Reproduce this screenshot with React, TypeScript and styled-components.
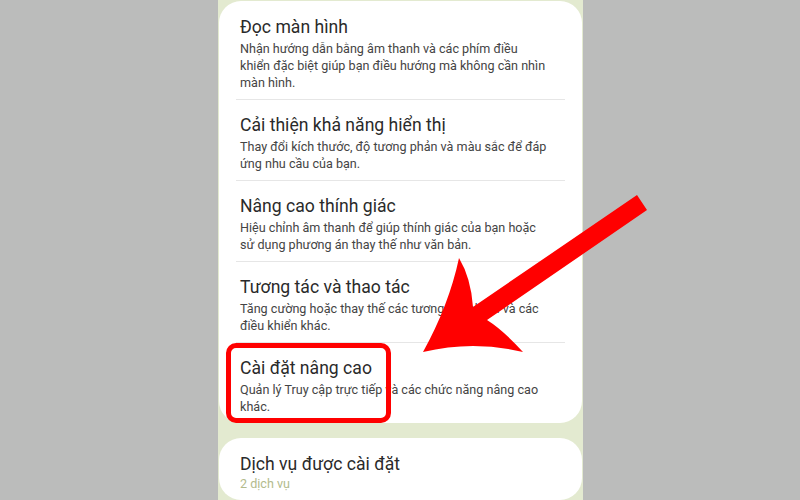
import styled, { createGlobalStyle } from "styled-components";

const GlobalStyle = createGlobalStyle`
    html, body {
        margin: 0;
        padding: 0;
        background: #bbbcbb;
    }
    body {
        font-family: Roboto, "Noto Sans", "Liberation Sans", sans-serif;
    }
`

const Page = styled.div`
    position: relative;
    width: 800px;
    height: 500px;
    overflow: hidden;
    display: flex;
    justify-content: center;
    background: #bbbcbb;
`
const Screen = styled.div`
    width: 365px;
    height: 500px;
    margin-left: 1px;
    padding: 1px 1px 0;
    box-sizing: border-box;
    display: flex;
    flex-direction: column;
    gap: 15px;
    background: #e3ead0;
`
const Card = styled.div`
    background: #fff;
    border-radius: 22px;
    display: flex;
    flex-direction: column;
    flex-shrink: 0;
`
const Item = styled.div<{ $highlight?: boolean }>`
    position: relative;
    padding: 15px 20px 8px 21px;
    ${props => props.$highlight && `
        &::after {
            content: "";
            position: absolute;
            left: 7px;
            top: 1px;
            width: 165px;
            bottom: 0;
            box-sizing: border-box;
            border: 5px solid #ff0000;
            border-radius: 10px;
        }
    `}
`
const Divided = styled(Card)`
    ${Item} + ${Item}::before {
        content: "";
        position: absolute;
        top: 0;
        left: 17px;
        right: 17px;
        height: 1px;
        background: #e6e6e6;
    }
`
const Title = styled.div`
    color: #2a2a2a;
    font-size: 17.6px;
    line-height: 22px;
`
const Desc = styled.div<{ $muted?: boolean }>`
    margin-top: ${props => props.$muted ? '0' : '2px'};
    color: ${props => props.$muted ? '#b3bb8c' : '#444'};
    font-size: 12.6px;
    line-height: 17px;
    max-width: 310px;
`
const Arrow = styled.svg`
    position: absolute;
    left: 0;
    top: 0;
    width: 800px;
    height: 500px;
    pointer-events: none;
`

const items = [
    {
        title: "Đọc màn hình",
        desc: "Nhận hướng dẫn bằng âm thanh và các phím điều khiển đặc biệt giúp bạn điều hướng mà không cần nhìn màn hình.",
    },
    {
        title: "Cải thiện khả năng hiển thị",
        desc: "Thay đổi kích thước, độ tương phản và màu sắc để đáp ứng nhu cầu của bạn.",
    },
    {
        title: "Nâng cao thính giác",
        desc: "Hiệu chỉnh âm thanh để giúp thính giác của bạn hoặc sử dụng phương án thay thế như văn bản.",
    },
    {
        title: "Tương tác và thao tác",
        desc: "Tăng cường hoặc thay thế các tương tác chạm và các điều khiển khác.",
    },
    {
        title: "Cài đặt nâng cao",
        desc: "Quản lý Truy cập trực tiếp và các chức năng nâng cao khác.",
        highlight: true,
    },
]

export default function App() {
    return (
        <>
            <GlobalStyle />
            <Page>
                <Screen>
                    <Divided>
                        {items.map(item => (
                            <Item key={item.title} $highlight={item.highlight}>
                                <Title>{item.title}</Title>
                                <Desc>{item.desc}</Desc>
                            </Item>
                        ))}
                    </Divided>
                    <Card>
                        <Item>
                            <Title>Dịch vụ được cài đặt</Title>
                            <Desc $muted>2 dịch vụ</Desc>
                        </Item>
                    </Card>
                </Screen>
                <Arrow viewBox="0 0 800 500">
                    <path
                        d="M637 195 L473 307 Q471 278 459 258 Q449 305 423 352 Q473 340 523 352 Q503 330 487 320 L647 210 Z"
                        fill="#ff0000"
                    />
                </Arrow>
            </Page>
        </>
    )
}
